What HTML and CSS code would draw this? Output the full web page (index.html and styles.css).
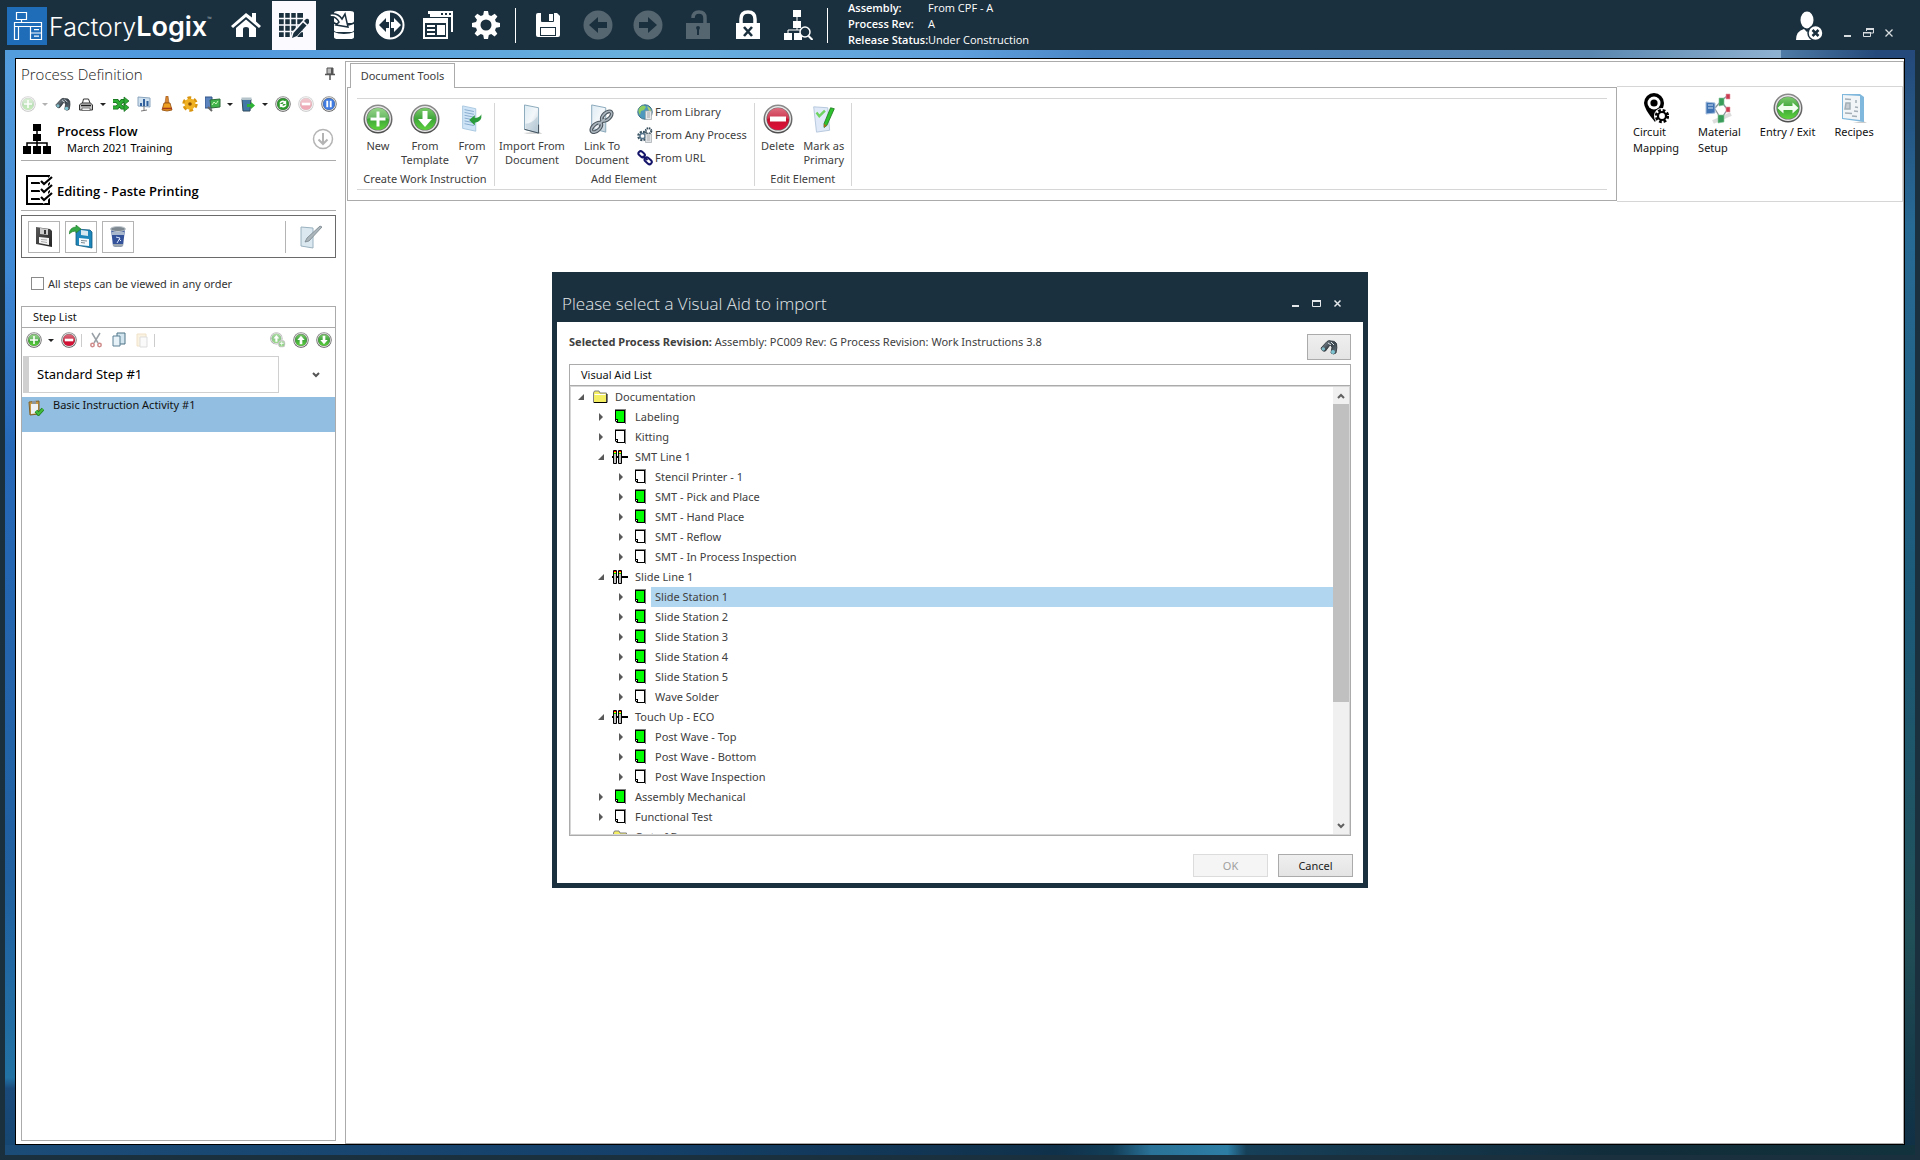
FILE: index.html
```html
<!DOCTYPE html>
<html lang="en">
<head>
<meta charset="utf-8">
<title>FactoryLogix</title>
<link rel="stylesheet" href="styles.css">
</head>
<body>
<svg class="defs" aria-hidden="true">
  <defs>
    <linearGradient id="gGreen" x1="0" y1="0" x2="0" y2="1"><stop offset="0" stop-color="#7ccb6c"/><stop offset=".5" stop-color="#3fa53a"/><stop offset="1" stop-color="#5cd23c"/></linearGradient>
    <linearGradient id="gRed" x1="0" y1="0" x2="0" y2="1"><stop offset="0" stop-color="#d9556a"/><stop offset=".5" stop-color="#c4122f"/><stop offset="1" stop-color="#e0103a"/></linearGradient>
    <linearGradient id="gRing" x1="0" y1="0" x2="0" y2="1"><stop offset="0" stop-color="#8d8d8d"/><stop offset="1" stop-color="#4c4c4c"/></linearGradient>
    <linearGradient id="gPage" x1="0" y1="0" x2="1" y2="1"><stop offset="0" stop-color="#dcebf3"/><stop offset=".5" stop-color="#f3f7fa"/><stop offset="1" stop-color="#b9cad6"/></linearGradient>
    <linearGradient id="gSteel" x1="0" y1="0" x2="1" y2="1"><stop offset="0" stop-color="#9aa7b0"/><stop offset=".5" stop-color="#3a444c"/><stop offset="1" stop-color="#6b7a84"/></linearGradient>
    <linearGradient id="gDisk" x1="0" y1="0" x2="1" y2="1"><stop offset="0" stop-color="#5a5a5a"/><stop offset="1" stop-color="#222"/></linearGradient>
  </defs>
  <symbol id="ring" viewBox="0 0 30 30"><circle cx="15" cy="15" r="14.5" fill="url(#gRing)"/><circle cx="15" cy="15" r="13" fill="#e9e9e9"/><circle cx="15" cy="15" r="11.6" fill="#6f6f6f"/></symbol>
  <symbol id="add" viewBox="0 0 30 30"><use href="#ring"/><circle cx="15" cy="15" r="11" fill="url(#gGreen)"/><path d="M4 15a11 11 0 0 1 22 0q-11-4-22 0z" fill="#fff" opacity=".2"/><path d="M13.500 7.500h3v6h6v3h-6v6h-3v-6h-6v-3h6z" fill="#fff"/></symbol>
  <symbol id="down" viewBox="0 0 30 30"><use href="#ring"/><circle cx="15" cy="15" r="11" fill="url(#gGreen)"/><path d="M12.500 7h5v8h4.500l-7 8-7-8h4.500z" fill="#fff"/></symbol>
  <symbol id="up" viewBox="0 0 30 30"><use href="#ring"/><circle cx="15" cy="15" r="11" fill="url(#gGreen)"/><path d="M12.500 23h5v-8h4.500l-7-8-7 8h4.500z" fill="#fff"/></symbol>
  <symbol id="minus" viewBox="0 0 30 30"><use href="#ring"/><circle cx="15" cy="15" r="11" fill="url(#gRed)"/><path d="M4 15a11 11 0 0 1 22 0q-11-4-22 0z" fill="#fff" opacity=".15"/><path d="M7 12.500h16v5H7z" fill="#fff"/></symbol>
  <symbol id="swap" viewBox="0 0 30 30"><use href="#ring"/><circle cx="15" cy="15" r="11" fill="url(#gGreen)"/><path d="M4.500 15l6-5.500v3.500h9V9.500l6 5.500-6 5.500V17h-9v3.500z" fill="#f2fff0"/></symbol>
  <symbol id="refresh" viewBox="0 0 30 30"><use href="#ring"/><circle cx="15" cy="15" r="11" fill="#2c9a2c"/><path d="M8 14a7 7 0 0 1 11-4l2-2v7h-7l2.500-2.500A4 4 0 0 0 11 14zM22 16a7 7 0 0 1-11 4l-2 2v-7h7l-2.500 2.500A4 4 0 0 0 19 16z" fill="#fff"/></symbol>
  <symbol id="pause" viewBox="0 0 30 30"><use href="#ring"/><circle cx="15" cy="15" r="11" fill="#3f7be0"/><path d="M10 9h3.500v12H10zM16.500 9H20v12h-3.500z" fill="#fff"/></symbol>
  <symbol id="binoc" viewBox="0 0 18 16"><path d="M1 9L7 2.500Q9 1 11 2q4-.5 5.500 2.500Q17.500 8 16 14q-2.500 2-5 0l1-6-2-2-4.500 6Q2 13 1 9z" fill="url(#gSteel)" stroke="#242c31" stroke-width=".8"/><circle cx="3.300" cy="10" r="1.800" fill="#7fb9c6"/><circle cx="13" cy="13" r="2" fill="#7fc5d2"/><path d="M8 4l3 2M11 3l3 3" stroke="#dde4e8"/></symbol>
  <symbol id="printer" viewBox="0 0 16 16"><path d="M4.500 7L5.500 3h5l1.500 4" fill="#fff" stroke="#333"/><path d="M1.500 9l2-2h9l2 2v5h-13z" fill="#c9c9c9" stroke="#333"/><path d="M3 9.500h10" stroke="#222" stroke-width="1.500"/><path d="M4 12h8v2.500H4z" fill="#f5f5f5" stroke="#555" stroke-width=".7"/></symbol>
  <symbol id="shuffle" viewBox="0 0 16 16"><path d="M0 5h4l5 6.500h3M0 11.500h4L9 5h3" fill="none" stroke="#156b1c" stroke-width="4"/><path d="M0 5h4l5 6.500h3M0 11.500h4L9 5h3" fill="none" stroke="#2fae35" stroke-width="2.600"/><path d="M11 1l5 4-5 4zM11 7.500l5 4-5 4z" fill="#2fae35" stroke="#156b1c" stroke-width=".7"/></symbol>
  <symbol id="easel" viewBox="0 0 16 16"><path d="M2 1l12 1v9L2 10z" fill="#cfe0ef" stroke="#8aa4bd"/><path d="M4 7h2v3H4zM7 3h2v7H7zM10.500 5h2v5h-2z" fill="#31609c"/><path d="M8 10v5M5 15l6-1" stroke="#777"/></symbol>
  <symbol id="broom" viewBox="0 0 16 16"><path d="M7 0h2l1 7H6z" fill="#d8862f" stroke="#8e4b12" stroke-width=".5"/><path d="M5 7h6l2 7q-5 2-10 0z" fill="#f0a020" stroke="#8e4b12" stroke-width=".8"/><path d="M3.500 12.500h9.500" stroke="#a43c1b" stroke-width="1.600"/></symbol>
  <symbol id="cog" viewBox="0 0 16 16"><circle cx="8" cy="8" r="5.700" fill="none" stroke="#d9940f" stroke-width="4" stroke-dasharray="3.400 2.570"/><circle cx="8" cy="8" r="5.500" fill="#f0b224"/><circle cx="8" cy="8" r="1.800" fill="#8a5208"/></symbol>
  <symbol id="screens" viewBox="0 0 16 16"><path d="M0 1h7v11H0z" fill="#5b83bd" stroke="#33548a"/><path d="M5 4l10-1v8l-9 1z" fill="#40b44a" stroke="#2e6a3a"/><path d="M7 9l2-3 2 2 2-3" stroke="#c8f3b9" fill="none"/><path d="M3 11l4 4" stroke="#666" stroke-width="2"/></symbol>
  <symbol id="binarrow" viewBox="0 0 16 16"><path d="M2 3h9l-1 12H3z" fill="#4178a5" stroke="#31495b"/><path d="M1.500 1.500h10v2.500h-10z" fill="#b5c3cb"/><path d="M7 8h4V6l4 3.500-4 3.500v-2H7z" fill="#2fb336"/></symbol>
  <symbol id="page" viewBox="0 0 22 32"><path d="M2 31l16-2 4 3H6z" fill="#999" opacity=".4"/><path d="M3 1l15 3v27L3 27z" fill="url(#gPage)" stroke="#86a6b9"/><path d="M4 21q7 0 13-8v17L4 26z" fill="#a9bfcd" opacity=".5"/><path d="M3 27l15 4V22" fill="none" stroke="#3f4d57"/></symbol>
  <symbol id="pagev7" viewBox="0 0 22 32"><path d="M1 2l14 3v24L1 26z" fill="#cfe4f6" stroke="#a9c8e0"/><path d="M3 6l10 2M3 9l10 2M3 12l10 2M3 15l10 2M3 18l10 2M3 21l10 2" stroke="#84a9cc"/><path d="M8 17l6-5v3q5 0 7-4 1 8-7 9v3z" fill="#2a9c3c"/></symbol>
  <symbol id="chain" viewBox="0 0 30 32"><path d="M4 1l15 3v26L4 26z" fill="url(#gPage)" stroke="#86a6b9"/><g fill="none" stroke="#4c565e" stroke-width="4"><ellipse cx="20" cy="13" rx="6.500" ry="3.500" transform="rotate(-42 20 13)"/><ellipse cx="9" cy="25" rx="6.500" ry="3.500" transform="rotate(-42 9 25)"/><path d="M11 22l7-6"/></g><g fill="none" stroke="#a9b4bc" stroke-width="1.800"><ellipse cx="20" cy="13" rx="6.500" ry="3.500" transform="rotate(-42 20 13)"/><ellipse cx="9" cy="25" rx="6.500" ry="3.500" transform="rotate(-42 9 25)"/><path d="M11 22l7-6"/></g></symbol>
  <symbol id="markpage" viewBox="0 0 24 32"><path d="M1 3l15 1 2 24-14 2z" fill="#dfe9f7" stroke="#b4c6dc"/><path d="M4 9l3 4 6-6" fill="none" stroke="#6fd35f" stroke-width="2.500"/><path d="M19 4l4 1-8 18-3 2v-4z" fill="#2fc22f" stroke="#176f17" stroke-width=".8"/><path d="M12 21l3 2-3 2z" fill="#a86b1e"/></symbol>
  <symbol id="globe" viewBox="0 0 16 16"><circle cx="8" cy="8" r="7.200" fill="#4f98bd" stroke="#3b6f8a"/><path d="M3 3q4-3 6 0l-2 3-3 1-1 4q-3-4 0-8z" fill="#8fcf62"/><path d="M10 2q4 2 4.500 6L12 7z" fill="#b5d66a"/><path d="M8.500 7h6v8.500h-6z" fill="#e6eaec" stroke="#a0a7ab" stroke-width=".7"/><path d="M10 9h3M10 11h3M10 13h3" stroke="#888" stroke-width=".7"/></symbol>
  <symbol id="cogs" viewBox="0 0 16 16"><circle cx="5.500" cy="9" r="4" fill="none" stroke="#3d5664" stroke-width="2.600" stroke-dasharray="2 1.140"/><circle cx="5.500" cy="9" r="2.600" fill="none" stroke="#57748a" stroke-width="1.500"/><circle cx="11.500" cy="4" r="2.800" fill="none" stroke="#344a58" stroke-width="2" stroke-dasharray="1.500 .7"/><path d="M8.500 7h6v8.500h-6z" fill="#e0e3e5" stroke="#a0a7ab" stroke-width=".7"/><path d="M10 9h3M10 11h3M10 13h3" stroke="#999" stroke-width=".7"/></symbol>
  <symbol id="link" viewBox="0 0 16 16"><g fill="none" stroke="#14146a" stroke-width="2"><rect x="1" y="2" width="7" height="4.500" rx="2.200" transform="rotate(42 4.500 4.500)"/><rect x="7" y="8.500" width="8" height="4.500" rx="2.200" transform="rotate(42 11 11)"/><path d="M5.500 6l5 4"/></g></symbol>
  <symbol id="pin2" viewBox="0 0 26 32"><path d="M11 1a10 10 0 0 1 10 10q0 2-1 5l-8 14Q1 17 1 11A10 10 0 0 1 11 1z"/><circle cx="11" cy="11" r="6.500" fill="#fff"/><circle cx="11" cy="11" r="3.600"/><circle cx="19" cy="24" r="8" fill="#fff"/><circle cx="19" cy="24" r="5.400" fill="none" stroke="#000" stroke-width="3.500" stroke-dasharray="2.500 1.740"/><circle cx="19" cy="24" r="4" fill="none" stroke="#000" stroke-width="2.200"/></symbol>
  <symbol id="material" viewBox="0 0 28 32"><path d="M8 30l18-8" stroke="#aaa" stroke-width="4" opacity=".4"/><path d="M10 16l6-7 6-5M16 9l6 8M10 17l6 10 6-9" fill="none" stroke="#8b959c" stroke-width="1.300"/><path d="M1 10l9 1v10l-9 1z" fill="#3f73b3" stroke="#a9c1de"/><path d="M3 13h5M3 16h5" stroke="#cfe0f3"/><path d="M14 6l5 0v7l-5 1zM13 23l6 0v7l-6 1z" fill="#3a9c5a" stroke="#88c79c" stroke-width=".6"/><path d="M21 2h4v5h-4zM21 15h4v5h-4z" fill="#c93c52" stroke="#e6a0aa" stroke-width=".6"/></symbol>
  <symbol id="recipes" viewBox="0 0 26 32"><path d="M22 29l4 2H12z" fill="#999" opacity=".5"/><path d="M1 2h18l4 3v25L1 27z" fill="#7fb8dc"/><path d="M2 3l17 1v24L2 26z" fill="#f1f5f8"/><path d="M4 7l6 .500M5 11h4v6H4zM4 21l7 .500M15 8v3M14 15l3 .500M13 19l4 .500M11 24l5 .500" stroke="#a3aeb6" fill="#c6ccd1" stroke-width="1.500"/></symbol>
  <symbol id="flow" viewBox="0 0 28 30"><path d="M10 0h8v7h-8zM10 10h8v7h-8zM0 22h8v8H0zM10 22h8v8h-8zM20 22h8v8h-8z"/><path d="M14 6v16M4 22v-3h20v3" fill="none" stroke="#000" stroke-width="1.500"/></symbol>
  <symbol id="checks" viewBox="0 0 27 30"><path d="M1 1h22v28H1z" fill="#fff" stroke="#000" stroke-width="2"/><path d="M5 8h9M5 16h9M5 24h9" stroke="#000" stroke-width="2"/><path d="M15 6l3 4 8-8M15 14l3 4 8-8M15 22l3 4 8-8" fill="none" stroke="#fff" stroke-width="4"/><path d="M15 6l3 3 8-7M15 14l3 3 8-7M15 22l3 3 8-7" fill="none" stroke="#000" stroke-width="2.200"/></symbol>
  <symbol id="disk" viewBox="0 0 18 22"><path d="M1 1l14 2 2 2v16L1 18z" fill="url(#gDisk)"/><path d="M5 2l8 1v6L5 8z" fill="#ccc"/><path d="M10 4v4" stroke="#333" stroke-width="2"/><path d="M4 11l10 1v7L4 17z" fill="#f4f4f4"/><path d="M6 13.500l6 .500M6 15.500l6 1" stroke="#999" stroke-width=".8"/></symbol>
  <symbol id="diskarrow" viewBox="0 0 24 24"><path d="M7 4l14 1 2 2v16L7 20z" fill="#1d86ba" stroke="#135a80" stroke-width=".8"/><path d="M12 5l7 1v5l-7-1z" fill="#d8e8f0"/><path d="M10 13l10 1v7l-10-1z" fill="#f7fafc"/><path d="M12 15.500l6 .500M12 17.500l4 .500" stroke="#7a8a94"/><path d="M0 9q1-7 7-7V0l5 4-5 4V6Q3 6 0 9z" fill="#35a845" stroke="#1d7a2a" stroke-width=".6"/></symbol>
  <symbol id="trash" viewBox="0 0 16 22"><path d="M1 3h14l-2 17q-5 2-10 0z" fill="#34529a"/><ellipse cx="8" cy="3" rx="7.500" ry="2.500" fill="#7d8891" stroke="#c3cad0"/><path d="M2 6h12v3H2z" fill="#a9b8cc"/><path d="M6 11l4 1-3 5M9 13l2 2" fill="none" stroke="#dce8ff"/><path d="M3 18h10v2q-5 2-10 0z" fill="#9aa5ae"/></symbol>
  <symbol id="edit" viewBox="0 0 22 24"><path d="M1 2l12 1v20L1 21z" fill="#dbe8ef" stroke="#9ab2c0"/><path d="M5 17l2-4L20 1l2 1L9 16z" fill="#aab5bb" stroke="#78858c" stroke-width=".8"/></symbol>
  <symbol id="cut" viewBox="0 0 12 16"><path d="M2 1l6 10M10 1L4 11" stroke="#9aa1a6" stroke-width="1.500"/><circle cx="2.500" cy="13" r="1.700" fill="none" stroke="#cf8a8a" stroke-width="1.500"/><circle cx="9.500" cy="13" r="1.700" fill="none" stroke="#cf8a8a" stroke-width="1.500"/></symbol>
  <symbol id="copy" viewBox="0 0 14 16"><path d="M5 1h8v11H5z" fill="#d3e6f0" stroke="#4d7286"/><path d="M1 4h7v10H1z" fill="#e6f2f8" stroke="#5d8094"/></symbol>
  <symbol id="paste" viewBox="0 0 12 16"><path d="M1 2h9v12H1z" fill="#fbf3e2" stroke="#f0e2c8"/><path d="M4 5h7v10H4z" fill="#fafafa" stroke="#ddd"/></symbol>
  <symbol id="clip" viewBox="0 0 16 16"><path d="M1 2l10-1v13l-9 1z" fill="#c99a45" stroke="#7e622d"/><path d="M3 4h7v9l-7 1z" fill="#eef2f4"/><path d="M4 1h4v3H4z" fill="#8f979b"/><path d="M8 11l2.500 3L15 9" fill="none" stroke="#1f7f1f" stroke-width="3.600"/><path d="M8 11l2.500 3L15 9" fill="none" stroke="#43bb3c" stroke-width="2"/></symbol>
  <symbol id="pin" viewBox="0 0 10 14"><path d="M2 1h6v6H2z" fill="#bbb" stroke="#555"/><path d="M6 1h2v6H6z" fill="#555"/><path d="M0 7.500h10M5 8v5" stroke="#555" stroke-width="1.500"/></symbol>
  <symbol id="circdown" viewBox="0 0 22 22"><circle cx="11" cy="11" r="9.500" fill="none" stroke="#b4b4b4" stroke-width="1.500"/><path d="M11 5v11M6.500 11.500L11 16l4.500-4.500" fill="none" stroke="#b4b4b4" stroke-width="2"/></symbol>
  <symbol id="doc" viewBox="0 0 16 16"><path d="M3 1h10v13H6l-3-3z"/><path d="M3 0h11v15h-1V1H3z" fill="#808080"/><path d="M3 1h10v13H5v-1h7V2H4v9H3z" fill="#000"/><path d="M3 10h3v3h1v1H5l-2-2z" fill="#000"/><path d="M4 11h1v1H4z" fill="#fff"/></symbol>
  <symbol id="line" viewBox="0 0 16 16"><path d="M0 8h16" stroke="#000" stroke-width="2"/><path d="M1.500 1.500h3v13h-3zM6.500 1.500h3v13h-3z" fill="#c0c0c0" stroke="#000"/><path d="M2 2h2v1H2zM7 2h2v1H7z" fill="#f00"/><path d="M2 3h2v1H2zM7 3h2v1H7z" fill="#ff0"/><path d="M2 4h2v1H2zM7 4h2v1H7z" fill="#0c0"/></symbol>
  <symbol id="folder" viewBox="0 0 16 16"><path d="M1.500 13.500V4l1-2H7l1 2h6.500v9.500z" fill="#f3ee62" stroke="#808080"/><path d="M2.500 5.500h11" stroke="#fff"/><path d="M2 13.500h13V5" fill="none" stroke="#000"/></symbol>
  <symbol id="open" viewBox="0 0 8 8"><path d="M7 1v6H1z" fill="#595959"/></symbol>
  <symbol id="closed" viewBox="0 0 8 8"><path d="M2 0l4 4-4 4z" fill="#595959"/></symbol>
</svg>

<header class="topbar">
  <div class="brand">
    <svg class="brand-mark" viewBox="0 0 40 38"><path d="M0 0h40v38H0z" fill="#1f6cb8"/><g fill="none" stroke="#fff" stroke-width="1.200"><path d="M9.500 5.500h10v7h-10zM14.500 13v2M12 15.500h6M7.500 15.500h27v4h-27zM7.500 19.500h4v13h-4zM23.500 19.500h11v13h-11zM23.500 26h11M27 22.700h5M27 29.200h5M11.500 19.500h12"/></g></svg>
    <span class="brand-name">Factory<b>Logix</b></span><span class="tm">™</span>
  </div>
  <nav class="modes" aria-label="Modules">
    <button aria-label="Home"><svg width="30" height="26" viewBox="0 0 30 26"><path d="M15 1L0 14l2 2L15 5l13 11 2-2-5-4.500V1h-4v4.500z"/><path d="M15 7.500L5 16v9h7v-8q0-2 3-2t3 2v8h7v-9z"/></svg></button>
    <button class="current" aria-label="Process definition"><svg width="30" height="28" viewBox="0 0 30 28"><path d="M0 1h24v24H0z"/><path d="M0 6.500h24M0 13h24M0 19.500h24M5.500 0v26M11.500 0v26M17.500 0v26" stroke="#fafaff" stroke-width="1.500"/><path d="M11 28l2-8L26 6l5 4-13 15z" fill="#fafaff"/><path d="M13 26l1.500-5L24 10.500l3.500 3L18 24zM25 9l2-2q2-1 3 1t0 3l-1.500 1.500z"/></svg></button>
    <button aria-label="Data import"><svg width="26" height="30" viewBox="0 0 26 30"><path d="M5 3q0-2 4-2h12q4 0 4 2v8q0 2-4 2H9q-4 0-4-2zM5 14q4 2 10 2t10-2v6q0 2-4 2H9q-4 0-4-2zM5 22q4 2 10 2t10-2v5q0 2-4 2H9q-4 0-4-2z"/><path d="M1 4q8-1 12 5l3-5 3 13-12-2 3-3Q7 6 1 7z" stroke="#1b303e" stroke-width="1.500"/></svg></button>
    <button aria-label="Transfer"><svg width="30" height="30" viewBox="0 0 30 30"><circle cx="15" cy="15" r="13.500" fill="none" stroke="currentColor" stroke-width="2"/><path d="M15 1a14 14 0 0 0 0 28z"/><path d="M14 12v6h-3v4l-7-7 7-7v4z" fill="#1b303e"/><path d="M16 12v6h3v4l7-7-7-7v4z"/></svg></button>
    <button aria-label="Windows"><svg width="30" height="30" viewBox="0 0 30 30"><path d="M5 1h25v21h-2V7H7V4H5z"/><path d="M18 3h2v2h-2zM22 3h2v2h-2zM26 3h2v2h-2z" fill="#1b303e"/><path d="M0 8h25v21H0z"/><path d="M2 13h21v14H2z" fill="#1b303e"/><path d="M4 15h8v2H4zM4 19h8v2H4zM4 23h8v2H4zM14 15h8v10h-8z"/></svg></button>
    <button aria-label="Settings"><svg width="30" height="30" viewBox="0 0 30 30"><path fill-rule="evenodd" d="M13 1h4l.800 4 2.400 1 3.500-2.300 2.700 2.700L24 9.800l1 2.300 4 .900v4l-4 .800-1 2.400 2.300 3.500-2.700 2.700-3.400-2.300-2.400 1L17 29h-4l-.800-4-2.400-1-3.500 2.300-2.700-2.700L6 20.200l-1-2.400-4-.800v-4l4-.900 1-2.300-2.400-3.400 2.700-2.700L9.800 6l2.400-1zM15 9.500a5.500 5.500 0 1 0 0 11 5.500 5.500 0 0 0 0-11z"/></svg></button>
  </nav>
  <span class="divider"></span>
  <div class="actions">
    <button aria-label="Save"><svg width="26" height="26" viewBox="0 0 26 26"><path d="M1 3q0-2 2-2h19l3 3v19q0 2-2 2H3q-2 0-2-2z"/><path d="M6 1h13v8q0 1-1 1H7q-1 0-1-1zM5 15h16v9H5z" fill="#1b303e"/><path d="M14 2h4v7h-4zM6 16h14v7H6z"/></svg></button>
    <button disabled aria-label="Back"><svg width="30" height="30" viewBox="0 0 30 30"><circle cx="15" cy="15" r="14.500"/><path d="M6 15l9-8v5h9v6h-9v5z" fill="#1b303e"/></svg></button>
    <button disabled aria-label="Forward"><svg width="30" height="30" viewBox="0 0 30 30"><circle cx="15" cy="15" r="14.500"/><path d="M24 15l-9-8v5H6v6h9v5z" fill="#1b303e"/></svg></button>
    <button disabled aria-label="Unlock"><svg width="26" height="30" viewBox="0 0 26 30"><path d="M1 13h24v16H1z"/><path d="M8 8q0-6 6-6t6 6v5" fill="none" stroke="currentColor" stroke-width="3.500"/><path d="M11 18a2 2 0 1 1 4 0l-1 2v5h-2v-5z" fill="#1b303e"/></svg></button>
    <button aria-label="Remove lock"><svg width="26" height="30" viewBox="0 0 26 30"><path d="M1 13h24v16H1z"/><path d="M6 13V9q0-7 7-7t7 7v4" fill="none" stroke="currentColor" stroke-width="3.500"/><path d="M9 17l8 9M17 17l-8 9" stroke="#1b303e" stroke-width="2.600"/></svg></button>
    <button aria-label="Find process"><svg width="30" height="30" viewBox="0 0 30 30"><path d="M10 0h8v7h-8zM10 11h8v7h-8zM1 23h8v7H1zM11 23h8v7h-8z"/><path d="M14 6v14M5 23v-3h14" fill="none" stroke="currentColor"/><circle cx="22" cy="22" r="5" fill="#1b303e" stroke="currentColor" stroke-width="1.500"/><path d="M25.500 26l4 4" stroke="currentColor" stroke-width="2"/></svg></button>
  </div>
  <span class="divider"></span>
  <dl class="status">
    <dt>Assembly:</dt><dd>From CPF - A</dd>
    <dt>Process Rev:</dt><dd>A</dd>
    <dt>Release Status:</dt><dd>Under Construction</dd>
  </dl>
  <div class="session">
    <button aria-label="Log out"><svg width="28" height="30" viewBox="0 0 28 30"><ellipse cx="12" cy="9" rx="6.500" ry="8.500"/><path d="M1 29q0-9 8-11l3 3 4-3 4 3v8z"/><circle cx="20.500" cy="22" r="7.500" stroke="#1b303e" stroke-width="1.500"/><path d="M17.500 19l6 6M23.500 19l-6 6" stroke="#1b303e" stroke-width="2.500"/></svg></button>
  </div>
  <div class="winctl">
    <button aria-label="Minimize"><svg width="10" height="10" viewBox="0 0 10 10"><path d="M1 7h7v2H1z"/></svg></button>
    <button aria-label="Restore"><svg width="11" height="10" viewBox="0 0 11 10"><path d="M3.500 3V1h7v4h-3M.500 4.500h7v4h-7z" fill="none" stroke="currentColor"/><path d="M3 0h8v2H3zM0 4h8v1.500H0z"/></svg></button>
    <button aria-label="Close"><svg width="10" height="10" viewBox="0 0 10 10"><path d="M1.500 1.500l7 7M8.500 1.500l-7 7" stroke="currentColor" stroke-width="1.300"/></svg></button>
  </div>
</header>

<main class="desk">
  <div class="shell">
    <aside class="side">
      <div class="side-title"><h1>Process Definition</h1><svg width="10" height="14"><use href="#pin"/></svg></div>
      <div class="slots">
        <button disabled aria-label="Add"><svg><use href="#add"/></svg></button><i class="caret dim"></i>
        <button aria-label="Find"><svg><use href="#binoc"/></svg></button>
        <button aria-label="Print"><svg><use href="#printer"/></svg></button><i class="caret"></i>
        <button aria-label="Shuffle"><svg><use href="#shuffle"/></svg></button>
        <button aria-label="Chart"><svg><use href="#easel"/></svg></button>
        <button aria-label="Clean"><svg><use href="#broom"/></svg></button>
        <button aria-label="Options"><svg><use href="#cog"/></svg></button>
        <button aria-label="Stations"><svg><use href="#screens"/></svg></button><i class="caret"></i>
        <button aria-label="Restore deleted"><svg><use href="#binarrow"/></svg></button><i class="caret"></i>
        <button aria-label="Refresh"><svg><use href="#refresh"/></svg></button>
        <button disabled aria-label="Remove"><svg><use href="#minus"/></svg></button>
        <button aria-label="Pause"><svg><use href="#pause"/></svg></button>
      </div>
      <div class="flow-head">
        <svg width="28" height="30"><use href="#flow"/></svg>
        <div><h2>Process Flow</h2><p>March 2021 Training</p></div>
        <svg class="end" width="22" height="22"><use href="#circdown"/></svg>
      </div>
      <div class="edit-head">
        <svg width="27" height="30"><use href="#checks"/></svg>
        <h2>Editing - Paste Printing</h2>
      </div>
      <div class="edit-bar">
        <button aria-label="Save"><svg width="18" height="22"><use href="#disk"/></svg></button>
        <button aria-label="Save and return"><svg width="24" height="24"><use href="#diskarrow"/></svg></button>
        <button aria-label="Discard"><svg width="16" height="22"><use href="#trash"/></svg></button>
        <button class="last" aria-label="Edit notes"><svg width="22" height="24"><use href="#edit"/></svg></button>
      </div>
      <label class="any-order"><input type="checkbox">All steps can be viewed in any order</label>
      <section class="steps">
        <h3>Step List</h3>
        <div class="slots">
          <button aria-label="Add step"><svg><use href="#add"/></svg></button><i class="caret"></i>
          <button aria-label="Delete step"><svg><use href="#minus"/></svg></button>
          <i class="bar"></i>
          <button aria-label="Cut"><svg><use href="#cut"/></svg></button>
          <button aria-label="Copy"><svg><use href="#copy"/></svg></button>
          <button aria-label="Paste"><svg><use href="#paste"/></svg></button>
          <i class="bar"></i>
          <button class="end faded" aria-label="Promote"><svg viewBox="0 0 30 30"><use href="#up" width="24" height="24"/><use href="#add" x="15" y="15" width="14" height="14"/></svg></button>
          <button aria-label="Move up"><svg><use href="#up"/></svg></button>
          <button aria-label="Move down"><svg><use href="#down"/></svg></button>
        </div>
        <div class="step"><span>Standard Step #1</span><button aria-label="Expand"><svg width="8" height="6" viewBox="0 0 8 6"><path d="M1 1l3 3 3-3" fill="none" stroke="#555" stroke-width="2"/></svg></button></div>
        <div class="activity"><svg width="16" height="16"><use href="#clip"/></svg><span>Basic Instruction Activity #1</span></div>
      </section>
    </aside>
    <div class="splitter"></div>
    <section class="work">
      <div class="ribbon-row">
        <div class="ribbon-wrap">
          <button class="tab">Document Tools</button>
          <div class="ribbon"><div class="ribbon-in">
            <div class="group">
              <div class="tools">
                <button class="w40"><svg width="30" height="30"><use href="#add"/></svg>New</button>
                <button class="w54"><svg width="30" height="30"><use href="#down"/></svg>From<br>Template</button>
                <button class="w40"><svg width="22" height="30"><use href="#pagev7"/></svg>From<br>V7</button>
              </div>
              <p>Create Work Instruction</p>
            </div>
            <div class="group">
              <div class="tools">
                <button class="w72"><svg width="22" height="30"><use href="#page"/></svg>Import From<br>Document</button>
                <button class="w64"><svg width="30" height="30"><use href="#chain"/></svg>Link To<br>Document</button>
                <div class="small">
                  <button><svg width="16" height="16"><use href="#globe"/></svg>From Library</button>
                  <button><svg width="16" height="16"><use href="#cogs"/></svg>From Any Process</button>
                  <button><svg width="16" height="16"><use href="#link"/></svg>From URL</button>
                </div>
              </div>
              <p>Add Element</p>
            </div>
            <div class="group">
              <div class="tools">
                <button class="w40"><svg width="30" height="30"><use href="#minus"/></svg>Delete</button>
                <button class="w50"><svg width="24" height="30"><use href="#markpage"/></svg>Mark as<br>Primary</button>
              </div>
              <p>Edit Element</p>
            </div>
          </div></div>
        </div>
        <div class="links">
          <button><svg width="26" height="32"><use href="#pin2"/></svg>Circuit<br>Mapping</button>
          <button><svg width="28" height="32"><use href="#material"/></svg>Material<br>Setup</button>
          <button><svg width="30" height="32"><use href="#swap"/></svg>Entry / Exit</button>
          <button><svg width="26" height="32"><use href="#recipes"/></svg>Recipes</button>
        </div>
      </div>
    </section>
  </div>
</main>

<div class="overlay">
  <div class="dialog" role="dialog" aria-labelledby="dlg">
    <div class="dlg-title">
      <h2 id="dlg">Please select a Visual Aid to import</h2>
      <button aria-label="Minimize"><svg width="10" height="10" viewBox="0 0 10 10"><path d="M1 6h7v2H1z"/></svg></button>
      <button aria-label="Maximize"><svg width="10" height="10" viewBox="0 0 10 10"><path d="M.500 1.500h8v6h-8z" fill="none" stroke="currentColor"/><path d="M0 1h9v2H0z"/></svg></button>
      <button aria-label="Close"><svg width="10" height="10" viewBox="0 0 10 10"><path d="M1.500 1.500l6 6M7.500 1.500l-6 6" stroke="currentColor" stroke-width="1.500"/></svg></button>
    </div>
    <div class="dlg-body">
      <div class="revision"><p><b>Selected Process Revision:</b> Assembly: PC009 Rev: G Process Revision: Work Instructions 3.8</p>
        <button aria-label="Find revision"><svg width="18" height="16"><use href="#binoc"/></svg></button></div>
      <div class="list">
        <h3>Visual Aid List</h3>
        <div class="list-body">
          <ul class="tree" role="tree">
            <li><div class="row"><svg class="tog"><use href="#open"/></svg><svg class="ico"><use href="#folder"/></svg><span>Documentation</span></div>
              <ul>
                <li><div class="row"><svg class="tog"><use href="#closed"/></svg><svg class="ico on"><use href="#doc"/></svg><span>Labeling</span></div></li>
                <li><div class="row"><svg class="tog"><use href="#closed"/></svg><svg class="ico"><use href="#doc"/></svg><span>Kitting</span></div></li>
                <li><div class="row"><svg class="tog"><use href="#open"/></svg><svg class="ico"><use href="#line"/></svg><span>SMT Line 1</span></div>
                  <ul>
                    <li><div class="row"><svg class="tog"><use href="#closed"/></svg><svg class="ico"><use href="#doc"/></svg><span>Stencil Printer - 1</span></div></li>
                    <li><div class="row"><svg class="tog"><use href="#closed"/></svg><svg class="ico on"><use href="#doc"/></svg><span>SMT - Pick and Place</span></div></li>
                    <li><div class="row"><svg class="tog"><use href="#closed"/></svg><svg class="ico on"><use href="#doc"/></svg><span>SMT - Hand Place</span></div></li>
                    <li><div class="row"><svg class="tog"><use href="#closed"/></svg><svg class="ico"><use href="#doc"/></svg><span>SMT - Reflow</span></div></li>
                    <li><div class="row"><svg class="tog"><use href="#closed"/></svg><svg class="ico"><use href="#doc"/></svg><span>SMT - In Process Inspection</span></div></li>
                  </ul></li>
                <li><div class="row"><svg class="tog"><use href="#open"/></svg><svg class="ico"><use href="#line"/></svg><span>Slide Line 1</span></div>
                  <ul>
                    <li><div class="row selected"><svg class="tog"><use href="#closed"/></svg><svg class="ico on"><use href="#doc"/></svg><span>Slide Station 1</span></div></li>
                    <li><div class="row"><svg class="tog"><use href="#closed"/></svg><svg class="ico on"><use href="#doc"/></svg><span>Slide Station 2</span></div></li>
                    <li><div class="row"><svg class="tog"><use href="#closed"/></svg><svg class="ico on"><use href="#doc"/></svg><span>Slide Station 3</span></div></li>
                    <li><div class="row"><svg class="tog"><use href="#closed"/></svg><svg class="ico on"><use href="#doc"/></svg><span>Slide Station 4</span></div></li>
                    <li><div class="row"><svg class="tog"><use href="#closed"/></svg><svg class="ico on"><use href="#doc"/></svg><span>Slide Station 5</span></div></li>
                    <li><div class="row"><svg class="tog"><use href="#closed"/></svg><svg class="ico"><use href="#doc"/></svg><span>Wave Solder</span></div></li>
                  </ul></li>
                <li><div class="row"><svg class="tog"><use href="#open"/></svg><svg class="ico"><use href="#line"/></svg><span>Touch Up - ECO</span></div>
                  <ul>
                    <li><div class="row"><svg class="tog"><use href="#closed"/></svg><svg class="ico on"><use href="#doc"/></svg><span>Post Wave - Top</span></div></li>
                    <li><div class="row"><svg class="tog"><use href="#closed"/></svg><svg class="ico on"><use href="#doc"/></svg><span>Post Wave - Bottom</span></div></li>
                    <li><div class="row"><svg class="tog"><use href="#closed"/></svg><svg class="ico"><use href="#doc"/></svg><span>Post Wave Inspection</span></div></li>
                  </ul></li>
                <li><div class="row"><svg class="tog"><use href="#closed"/></svg><svg class="ico on"><use href="#doc"/></svg><span>Assembly Mechanical</span></div></li>
                <li><div class="row"><svg class="tog"><use href="#closed"/></svg><svg class="ico"><use href="#doc"/></svg><span>Functional Test</span></div></li>
                <li><div class="row"><svg class="tog"></svg><svg class="ico"><use href="#folder"/></svg><span>Out of Box</span></div></li>
              </ul></li>
          </ul>
          <div class="scroll">
            <button aria-label="Scroll up"><svg width="8" height="6" viewBox="0 0 8 6"><path d="M1 5l3-3 3 3" fill="none" stroke="#606060" stroke-width="2"/></svg></button>
            <div class="thumb"></div>
            <button aria-label="Scroll down"><svg width="8" height="6" viewBox="0 0 8 6"><path d="M1 1l3 3 3-3" fill="none" stroke="#606060" stroke-width="2"/></svg></button>
          </div>
        </div>
      </div>
      <div class="dlg-foot"><button disabled>OK</button><button>Cancel</button></div>
    </div>
  </div>
</div>
</body>
</html>
```
FILE: styles.css
```css
* { box-sizing: border-box; }
body {
  margin: 0;
  min-height: 100vh;
  display: flex;
  flex-direction: column;
  background: #1b303e;
  font: 11px/14px "Noto Sans", "Open Sans", sans-serif;
  color: #404040;
}
h1, h2, h3, p, ul, dl, dd { margin: 0; padding: 0; }
button { margin: 0; padding: 0; border: 0; background: none; font: inherit; color: inherit; }
svg { display: block; flex: none; }
.defs { position: absolute; width: 0; height: 0; }

/* top bar */
.topbar { display: flex; align-items: center; height: 50px; padding-left: 7px; color: #fff; }
.topbar svg { fill: currentColor; }
.brand { display: flex; align-items: center; width: 217px; height: 50px; }
.brand-mark { width: 40px; height: 38px; margin-top: 2px; }
.brand-name { margin: 4px 0 0 2px; font: 300 25px/48px Inter, sans-serif; }
.brand-name b { font-size: 27px; font-weight: 600; }
.tm { align-self: flex-start; margin-top: 12px; font-size: 6px; color: #9aa6ae; }
.modes, .actions { display: flex; align-self: stretch; }
.modes { gap: 4px; }
.actions { gap: 6px; margin: 0 7px 0 10px; }
.modes button, .actions button {
  width: 44px; display: flex; align-items: center; justify-content: center;
}
.modes .current { background: #fafaff; color: #1b303e; margin-top: 1px; }
.actions button:disabled { color: #566671; }
.divider { width: 1px; height: 35px; margin-top: 1px; background: #fff; }
.modes + .divider { margin-left: 7px; }
.status { display: grid; grid-template-columns: 80px auto; margin: 0 0 2px 20px; font: 11px/16px "Open Sans", sans-serif; }
.status dt { font-weight: 600; white-space: nowrap; }
.session { margin-left: auto; margin-right: 20px; padding-top: 5px; }
.winctl { display: flex; gap: 10px; margin-right: 26px; padding-top: 15px; color: #d8dcdf; }

/* desktop backdrop */
.desk {
  flex: 1; display: flex; margin: 0 5px 5px; padding: 8px 10px 10px;
  background:
    linear-gradient(90deg, #549ddd 0, #4f97dd 11%, #69b0dd 33%, #5f9fdc 50%, #4a86c6 57%, #5a87b0 83%, #8fb2d1 93%, #4f7ba6 93%, #24497a 98%) top / 100% 8px no-repeat,
    linear-gradient(90deg, #1b4c77 0, #14406a 33%, #10314a 55%, #123d57 58%, #2a7297 60%, #2d7ea5 64%, #163f58 65%, #112c3a 85%, #12333d 100%) bottom / 100% 10px no-repeat,
    linear-gradient(180deg, #24497a 0, #276a94 16%, #1c5a78 50%, #215058 80%, #163a48 92%, #0f2f46 100%) right / 10px 100% no-repeat,
    linear-gradient(180deg, #549ddd 0, #3f88d4 20%, #2668b8 36%, #2060a0 75%, #2272a4 93%, #1a4a7a 94%, #154570 100%);
}
.shell { flex: 1; display: flex; border: 1px solid #000; background: #fff; }

/* side panel */
.side { width: 328px; display: flex; flex-direction: column; }
.side > * { margin: 0 8px 0 5px; }
.side-title { display: flex; justify-content: space-between; align-items: center; height: 32px; padding: 0 1px 2px 0; }
h1 { font: 300 15px/20px "Open Sans", sans-serif; color: #222; }
.slots { display: flex; align-items: center; height: 26px; }
.side > .slots { margin: 0; }
.slots button { width: 23px; height: 20px; display: flex; align-items: center; justify-content: center; }
.slots svg { width: 16px; height: 16px; }
.slots button:disabled { opacity: .35; }
.slots .faded { opacity: .6; }
.caret { width: 12px; display: flex; justify-content: center; }
.caret::after { content: ""; border: 3px solid transparent; border-top-color: #222; border-bottom: 0; }
.caret.dim { opacity: .35; }
.flow-head, .edit-head { display: flex; align-items: center; border-bottom: 1px solid #ababab; height: 44px; padding: 0 2px; color: #000; }
.flow-head svg:first-child { margin-right: 6px; }
.flow-head p { padding-left: 10px; line-height: 16px; }
.end { margin-left: auto; }
h2 { font-size: 13px; line-height: 18px; font-weight: 600; }
.flow-head h2, .edit-head h2 { font-family: "Open Sans", sans-serif; }
.edit-head { height: 50px; padding: 9px 0 1px 5px; }
.edit-head svg { margin-right: 4px; }
.edit-head h2 { padding-top: 2px; }
.edit-bar { margin-top: 4px; height: 43px; border: 1px solid #6a6a6a; display: flex; align-items: center; gap: 5px; padding: 1px 0 0 6px; }
.edit-bar button { width: 32px; height: 32px; border: 1px solid #b4b4b4; display: grid; place-items: center; }
.edit-bar .last { margin-left: auto; width: 50px; border-width: 0 0 0 1px; }
.any-order { display: flex; align-items: center; gap: 4px; padding: 18px 10px 15px; height: 48px; color: #333; }
.any-order input { appearance: none; width: 13px; height: 13px; margin: 0; border: 1px solid #8a8a8a; background: #fff; }
.side > .steps { flex: 1; margin-bottom: 3px; border: 1px solid #ababab; }
.steps h3, .list h3 { height: 21px; padding-left: 11px; border-bottom: 1px solid #ababab; font-size: 11px; line-height: 20px; font-weight: 400; color: #111; }
.steps .slots { height: 24px; }
.bar { width: 1px; height: 13px; margin: 0 2px 0 1px; background: #ccc; }
.step { display: flex; height: 37px; margin: 4px 0 4px 1px; color: #000; }
.step span { width: 256px; border: 1px solid #d0d0d0; border-left-width: 6px; padding-left: 8px; font-size: 13px; line-height: 35px; }
.step button { margin: 0 auto; padding-left: 18px; }
.activity { display: flex; height: 35px; padding: 1px 6px; gap: 9px; background: #92bfe1; color: #111; }
.activity svg { margin-top: 2px; }
.splitter { width: 1px; }

/* work area */
.work { flex: 1; margin-top: 2px; border: 1px solid #ababab; min-width: 0; }
.ribbon-row { display: flex; padding-top: 1px; }
.ribbon-wrap { flex: 1; padding-left: 1px; }
.tab { display: block; position: relative; height: 25px; width: 105px; margin: 0 0 -1px 3px; border: 1px solid #ababab; border-bottom: 0; background: #fff; }
.ribbon { border: 1px solid #ababab; height: 114px; padding: 10px 9px; }
.ribbon-in { height: 92px; border: solid #d6d6d6; border-width: 1px 0; display: flex; padding: 4px 0 3px; }
.group { border-right: 1px solid #d6d6d6; display: flex; flex-direction: column; padding: 0 1px 0 0; text-align: center; }
.group:last-child { padding: 0 2px; }
.tools { flex: 1; display: flex; }
.tools > button, .links button { display: flex; flex-direction: column; align-items: center; justify-content: flex-start; gap: 5px; white-space: nowrap; padding-top: 1px; }
.w40 { width: 42px; }
.w50 { width: 50px; }
.w54 { width: 52px; }
.w64 { width: 66px; }
.w72 { width: 74px; }
.small { display: flex; flex-direction: column; gap: 7px; padding: 1px 6px 0 2px; }
.small button { display: flex; align-items: center; gap: 2px; height: 16px; white-space: nowrap; }
.group p { line-height: 14px; white-space: nowrap; }
.links { margin-top: 23px; width: 286px; height: 116px; border: 1px solid #d6d6d6; border-left: 0; display: flex; align-items: flex-start; gap: 19px; padding: 4px 16px; color: #111; }
.links button { gap: 0; line-height: 16px; text-align: left; }

/* dialog */
.overlay { position: fixed; inset: 0; display: grid; place-items: center; }
.dialog { width: 816px; height: 616px; display: flex; flex-direction: column; border: 5px solid #1b303e; border-top: 0; background: #fff; }
.dlg-title { height: 50px; flex: none; display: flex; align-items: center; gap: 11px; padding: 14px 20px 0 5px; background: #1b303e; color: #e4e8ea; }
.dlg-title h2 { flex: 1; font: 300 17px/22px "Open Sans", sans-serif; }
.dlg-title svg { fill: currentColor; }
.dlg-body { flex: 1; display: flex; flex-direction: column; padding: 12px 10px 6px 12px; min-height: 0; }
.revision { display: flex; justify-content: space-between; margin-right: 2px; line-height: 16px; }
.revision b { font-weight: 700; }
.revision button, .dlg-foot button { border: 1px solid #ababab; background: linear-gradient(#efefef, #e4e4e4); }
.revision button { width: 44px; height: 26px; display: grid; place-items: center; }
.list { flex: 1; min-height: 0; display: flex; flex-direction: column; margin: 4px 2px 18px 0; border: 1px solid #ababab; }
.list h3 { flex: none; }
.list-body { flex: 1; min-height: 0; display: flex; border: 1px solid #d6d6d6; }
.tree { flex: 1; overflow: hidden; }
.tree, .tree ul { list-style: none; }
.tree ul { padding-left: 20px; }
.row { display: flex; align-items: center; height: 20px; padding-left: 6px; }
.tog { width: 8px; height: 8px; margin-right: 7px; }
.ico { width: 16px; height: 16px; margin-right: 3px; fill: #fff; }
.ico.on { fill: #0f0; }
.row span { flex: 1; padding-left: 4px; line-height: 20px; }
.selected span { background: #b0d6f0; }
.scroll { width: 16px; display: flex; flex-direction: column; background: #f0f0f0; }
.scroll button { height: 17px; display: grid; place-items: center; }
.thumb { height: 298px; background: #c0c0c0; margin-bottom: auto; }
.dlg-foot { display: flex; justify-content: flex-end; gap: 10px; }
.dlg-foot button { width: 75px; height: 23px; color: #222; }
.dlg-foot button:disabled { color: #a0a0a0; border-color: #dcdcdc; background: #f5f5f5; }
```
